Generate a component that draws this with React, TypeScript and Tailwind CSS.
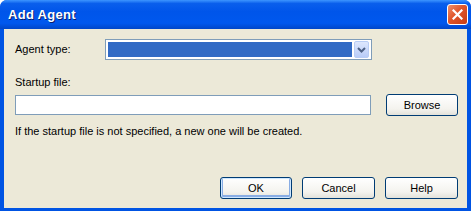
export default function App() {
  const btn =
    "h-[22px] rounded-[3px] border border-[#003c74] bg-[linear-gradient(to_bottom,#ffffff,#f4f3ee_70%,#e3e2da)] text-black text-[11px] flex items-center justify-center";

  return (
    <div className="w-[473px] h-[213px] bg-white font-['Liberation_Sans',sans-serif] text-[11px] text-black">
      <div className="w-[471px] h-[211px] flex flex-col rounded-t-[7px] overflow-hidden bg-[#0054e3]">
        {/* Title bar */}
        <div className="h-[29px] shrink-0 flex items-center justify-between pl-[8px] pr-[3px] bg-[linear-gradient(to_bottom,#3d95ff,#0a5fec_12%,#0055ea_40%,#0058ee_80%,#0046c8)]">
          <span className="text-white font-bold text-[13px] tracking-[0.3px] [text-shadow:1px_1px_0_#0a1e6e]">
            Add Agent
          </span>
          <div className="w-[21px] h-[21px] rounded-[3px] border border-white bg-[linear-gradient(135deg,#f0906c,#e0552a_45%,#c63c14)] flex items-center justify-center">
            <svg width="11" height="11" viewBox="0 0 11 11">
              <path d="M1.5 1.5 L9.5 9.5 M9.5 1.5 L1.5 9.5" stroke="white" strokeWidth="2.2" strokeLinecap="square" />
            </svg>
          </div>
        </div>

        {/* Body */}
        <div className="flex-1 mx-[4px] mb-[3px] bg-[#ece9d8] flex flex-col pl-[11px] pr-[9px]">
          <div className="mt-[10px] h-[21px] flex items-center">
            <span className="w-[90px]">Agent type:</span>
            <div className="w-[267px] h-[21px] border border-[#7f9db9] bg-white flex items-center p-[2px] gap-[2px]">
              <div className="flex-1 h-full bg-[#316ac5]" />
              <div className="w-[15px] h-[17px] rounded-[2px] border border-[#b8cdf5] bg-[linear-gradient(to_bottom,#dde7fd,#b8ccf8)] flex items-center justify-center">
                <svg width="9" height="6" viewBox="0 0 9 6">
                  <path d="M1 1 L4.5 4.5 L8 1" stroke="#4d6185" strokeWidth="2" fill="none" />
                </svg>
              </div>
            </div>
          </div>

          <div className="mt-[16px] leading-[13px]">Startup file:</div>

          <div className="mt-[5px] flex items-center">
            <div className="w-[357px] h-[20px] border border-[#7f9db9] bg-white" />
            <button className={btn + " w-[72px] ml-[15px]"}>Browse</button>
          </div>

          <div className="mt-[9px] leading-[13px]">If the startup file is not specified, a new one will be created.</div>

          <div className="mt-auto mb-[9px] flex justify-end gap-[10px]">
            <button className={btn + " w-[72px] shadow-[inset_0_0_0_1px_#cee7ff,inset_0_-1px_0_2px_#89ade4]"}>OK</button>
            <button className={btn + " w-[73px]"}>Cancel</button>
            <button className={btn + " w-[73px]"}>Help</button>
          </div>
        </div>
      </div>
    </div>
  );
}
